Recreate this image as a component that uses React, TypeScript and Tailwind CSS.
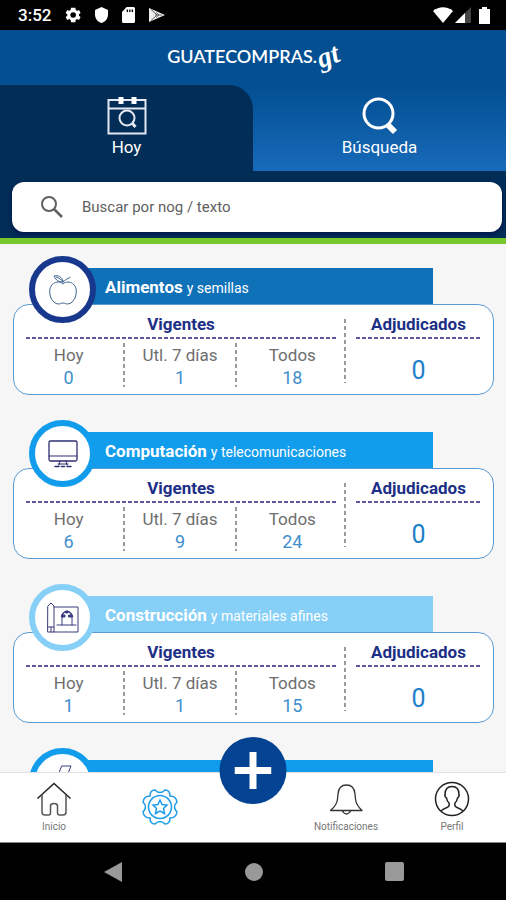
import type { ReactNode } from "react";

type Category = {
  name: string;
  rest: string;
  tone: string;
  ring: string;
  icon: ReactNode;
  counts: [string, number][];
  awarded: number;
};

const lineIcon = {
  fill: "none",
  stroke: "currentColor",
  strokeLinecap: "round",
  strokeLinejoin: "round",
  "aria-hidden": true,
} as const;

const AppleIcon = () => (
  <svg {...lineIcon} width="32" height="34" viewBox="0 0 32 34" className="text-[#3f6590]">
    <path d="M16 10.500c-3-2-7-2-9.500 0C2 13 2 20 4 25c1.500 3 4 6 7.500 6 2 0 2.500-1 4.500-1s2.500 1 4.500 1c3.500 0 6-3 7.500-6 2-5 2-12-2.500-14.500-2.500-2-6.500-2-9.500 0z" />
    <path d="M16 8.500c-4 1-7-1-9-5.500 4-1 8 .5 9 5.500zM16 8.500c2-1 4-3 7-4M9 4c3 1 5 2.500 7 4.500" />
  </svg>
);

const ComputerIcon = () => (
  <svg {...lineIcon} width="32" height="30" viewBox="0 0 32 30" className="text-[#2d2f73]">
    <rect x="2" y="2" width="28" height="20" rx="1.500" strokeWidth="1.300" />
    <path d="M2 17h28M13 22l-1 4M19 22l1 4M11 25h10" />
    <path d="M8 27.500h4M14.500 27.500h3M20 27.500h4" strokeWidth="1.500" />
  </svg>
);

const PlanIcon = () => (
  <svg {...lineIcon} width="34" height="32" viewBox="0 0 34 32" className="text-[#3b3b80]">
    <path d="M2 4l3-3 3 3v26H2zM8 5h24v25H8M2 25h6M5 25v5M11 23h19M16 23v-9M26 23v-9" />
    <path d="M15.500 14.500c1-3 3-5 5.500-5s4.500 2 5.500 5" strokeWidth="1.500" />
    <path d="M16 13h3v2h-3zM23 13h3v2h-3zM20 9h2v2h-2z" fill="currentColor" />
  </svg>
);

const BoltIcon = () => (
  <svg {...lineIcon} width="32" height="34" viewBox="0 0 32 34" className="text-[#3b3b80]">
    <path d="M15 1h9l-4 10h6L12 32l4-15H9z" />
  </svg>
);

const categories: Category[] = [
  { name: "Alimentos", rest: "y semillas", tone: "bg-[#0f72b9]", ring: "border-[#17388c]", icon: <AppleIcon />, counts: [["Hoy", 0], ["Utl. 7 días", 1], ["Todos", 18]], awarded: 0 },
  { name: "Computación", rest: "y telecomunicaciones", tone: "bg-[#119cec]", ring: "border-[#119cec]", icon: <ComputerIcon />, counts: [["Hoy", 6], ["Utl. 7 días", 9], ["Todos", 24]], awarded: 0 },
  { name: "Construcción", rest: "y materiales afines", tone: "bg-[#86cff7]", ring: "border-[#86cff7]", icon: <PlanIcon />, counts: [["Hoy", 1], ["Utl. 7 días", 1], ["Todos", 15]], awarded: 0 },
  { name: "Electricidad", rest: "", tone: "bg-[#119cec]", ring: "border-[#119cec]", icon: <BoltIcon />, counts: [], awarded: 0 },
];

const HorizontalDashes = () => (
  <div className="h-0.5 bg-[repeating-linear-gradient(90deg,#5c569f_0_4px,transparent_4px_6px)]" />
);

const VerticalDashes = ({ className = "" }: { className?: string }) => (
  <div className={`w-0.5 shrink-0 bg-[repeating-linear-gradient(180deg,#9a9a9a_0_4px,transparent_4px_7px)] ${className}`} />
);

function CategoryCard({ item }: { item: Category }) {
  return (
    <article className="relative">
      <h2 className={`mr-[61px] ml-12 flex h-9 items-center gap-1 pt-0.5 pl-11 text-white ${item.tone}`}>
        <span className="text-[17px] leading-6 font-bold">{item.name}</span>
        <span className="pt-0.5 text-sm">{item.rest}</span>
      </h2>
      {item.counts.length > 0 && (
        <div className="flex h-[91px] rounded-2xl border border-[#5b9bd3] bg-white px-3 pt-2">
          <section className="flex-1">
            <h3 className="pb-0.5 text-center text-[17px] leading-[22px] font-bold text-[#1c2f86]">Vigentes</h3>
            <HorizontalDashes />
            <dl className="-mr-3 -ml-3 flex pt-1">
              {item.counts.map(([label, value], index) => (
                <div key={label} className="flex flex-1">
                  <div className="flex-1 text-center">
                    <dt className="text-[17px] leading-6 text-[#6e6e6e]">{label}</dt>
                    <dd className="text-lg leading-[22px] text-[#3f8fcd]">{value}</dd>
                  </div>
                  {index < 2 && <VerticalDashes className="h-11" />}
                </div>
              ))}
            </dl>
          </section>
          <VerticalDashes className="mr-2.5 ml-2 mt-1.5 h-16" />
          <section className="w-[125px]">
            <h3 className="pb-0.5 text-center text-[17px] leading-[22px] font-bold text-[#1c2f86]">Adjudicados</h3>
            <HorizontalDashes />
            <p className="pt-4 text-center text-[25px] leading-8 text-[#1c80c8]">{item.awarded}</p>
          </section>
        </div>
      )}
      <div className={`absolute -top-3 left-4 flex size-[67px] items-center justify-center rounded-full border-[6px] bg-white ${item.ring}`}>
        {item.icon}
      </div>
    </article>
  );
}

function StatusBar() {
  return (
    <div className="flex h-[30px] shrink-0 items-center justify-between bg-black pr-4 pl-[18px] text-white">
      <div className="flex items-center gap-3.5">
        <time className="text-[17px] leading-5 font-medium">3:52</time>
        <svg width="16" height="16" viewBox="2 2 20 20" fill="currentColor" aria-hidden="true">
          <path fillRule="evenodd" d="M19.400 13a7 7 0 0 0 0-2l2.100-1.600-2-3.500-2.500 1a7 7 0 0 0-1.700-1L15 3H9.500l-.5 2.900a7 7 0 0 0-1.700 1l-2.500-1-2 3.500L4.900 11a7 7 0 0 0 0 2l-2.100 1.600 2 3.500 2.500-1a7 7 0 0 0 1.700 1l.5 2.900H15l.3-2.900a7 7 0 0 0 1.700-1l2.500 1 2-3.500zM12.200 15.500a3.500 3.500 0 1 1 0-7 3.500 3.500 0 0 1 0 7z" />
        </svg>
        <svg width="13" height="16" viewBox="0 0 14 16" preserveAspectRatio="none" fill="currentColor" aria-hidden="true">
          <path d="M7 0l7 3v4.500C14 11.500 11 15 7 16 3 15 0 11.500 0 7.500V3z" />
        </svg>
        <svg width="13" height="16" viewBox="0 0 14 16" preserveAspectRatio="none" fill="currentColor" aria-hidden="true">
          <path fillRule="evenodd" d="M5 0h7.500A1.500 1.500 0 0 1 14 1.500v13a1.500 1.500 0 0 1-1.500 1.500h-11A1.500 1.500 0 0 1 0 14.500V5zM5 2.500V5h1.500V2.500zm2.700 0V5h1.500V2.500zm2.700 0V5h1.500V2.500z" />
        </svg>
        <svg width="16" height="16" viewBox="0 0 16 16" aria-hidden="true">
          <path d="M0 1l16 7L0 15z" fill="#eee" />
          <path d="M2 2.500l6 5.500-6 5.500M6 8l7 0M7 5.500l3 2.500-3 2.500" fill="none" stroke="#666" />
        </svg>
      </div>
      <div className="flex items-center">
        <svg width="20" height="16" viewBox="0 0 20 16" fill="currentColor" aria-hidden="true">
          <path d="M0 4C6-1 14-1 20 4L10 16z" />
        </svg>
        <svg width="16" height="16" viewBox="0 0 16 16" className="ml-0.5" aria-hidden="true">
          <path d="M16 0v16H0z" fill="#444" />
          <path d="M10 6v10H0z" fill="#fff" />
        </svg>
        <svg width="11" height="17" viewBox="0 0 11 17" fill="currentColor" className="ml-2" aria-hidden="true">
          <path d="M3 0h5v2h3v15H0V2h3z" />
        </svg>
      </div>
    </div>
  );
}

function NavButton({ label, children }: { label: string; children: ReactNode }) {
  return (
    <button type="button" className="flex w-20 flex-col items-center pt-2 text-[10px] leading-3 text-[#777]">
      {children}
      <span className="pt-1">{label}</span>
    </button>
  );
}

export default function App() {
  return (
    <div className="flex h-screen flex-col bg-[#f6f6f6] font-[Roboto,'Noto_Sans',sans-serif]">
      <StatusBar />
      <header className="shrink-0 border-b-[6px] border-[#78c82d] bg-[#022d56]">
        <div className="bg-linear-to-b from-[#034f92] from-40% to-[#176bba]">
          <h1 className="flex h-[55px] items-center justify-center pb-1 font-[Lato,sans-serif] text-lg font-semibold text-white">
            GUATECOMPRAS.
            <span className="-rotate-20 font-['Liberation_Serif',serif] text-[28px] leading-7 italic">gt</span>
          </h1>
          <nav className="flex h-[86px] text-[17px] leading-6 text-white">
            <button type="button" className="flex flex-1 flex-col items-center rounded-tr-3xl bg-[#022d56] pt-3">
              <svg width="40" height="38" viewBox="0 0 40 38" fill="none" stroke="#e4e8f4" strokeWidth="2" aria-hidden="true">
                <rect x="1.500" y="3" width="37" height="33.500" />
                <path d="M1 11.500h38" />
                <path d="M14 0v7M27 0v7" stroke="#fff" strokeWidth="5" />
                <circle cx="20" cy="21" r="7.500" />
                <path d="M25 26l3.500 4" strokeWidth="3" />
              </svg>
              Hoy
            </button>
            <button type="button" className="flex flex-1 flex-col items-center pt-3">
              <svg width="38" height="38" viewBox="0 0 38 38" fill="none" stroke="white" strokeWidth="3" aria-hidden="true">
                <circle cx="17.500" cy="16.500" r="14.500" />
                <path d="M27 28l7 7" strokeWidth="6" />
              </svg>
              Búsqueda
            </button>
          </nav>
        </div>
        <div className="px-3 pt-[11px] pr-1 pb-1.5">
          <label className="flex h-[50px] items-center gap-[18px] rounded-xl bg-white pl-7 shadow-[0_2px_4px_#02104f]">
            <svg width="24" height="24" viewBox="0 0 24 24" fill="none" stroke="#606060" strokeWidth="2" aria-hidden="true">
              <circle cx="9" cy="9" r="7" />
              <path d="M14 14l8 8" strokeWidth="2.500" />
            </svg>
            <input type="search" aria-label="Buscar" placeholder="Buscar por nog / texto" className="min-w-0 flex-1 bg-transparent text-[15px] outline-none placeholder:text-[#606060]" />
          </label>
        </div>
      </header>

      <main className="flex min-h-0 flex-1 flex-col gap-[37px] overflow-y-auto pt-6 pr-3 pl-[13px] [scrollbar-width:none]">
        {categories.map((item) => (
          <CategoryCard key={item.name} item={item} />
        ))}
      </main>

      <nav className="relative flex h-[70px] shrink-0 justify-between border-t border-[#e0e0e0] bg-white px-3.5">
        <div className="flex gap-[26px]">
          <NavButton label="Inicio">
            <svg width="36" height="36" viewBox="0 0 36 36" fill="none" stroke="#555" strokeWidth="1.500" aria-hidden="true">
              <path d="M1.500 17.500L18 2.500l16.500 15" stroke="#222" />
              <path d="M6 14v17q0 3 3 3h3.500q2 0 2-2v-7q0-2.500 3.500-2.500t3.500 2.500v7q0 2 2 2H27q3 0 3-3V14" />
            </svg>
          </NavButton>
          <button type="button" aria-label="Destacados" className="flex w-20 justify-center pt-[15px]">
            <svg width="38" height="38" viewBox="-19 -19 38 38" fill="none" stroke="#1b9be8" strokeWidth="1.500" aria-hidden="true">
              <path d="M-5-17Q0-12 5-17q5 0 5 6 6 0 7 6-5 5 0 10-1 6-7 6 0 6-5 6-5-5-10 0-5 0-5-6-6 0-7-6 5-5 0-10 1-6 7-6 0-6 5-6z" />
              <circle r="11.500" />
              <path d="M0-7l2 4.500 5 .5-3.500 3.500 1 5L0 4l-4.500 2.500 1-5L-7-2l5-.5z" />
            </svg>
          </button>
        </div>
        <div className="flex gap-[26px]">
          <NavButton label="Notificaciones">
            <svg width="36" height="36" viewBox="0 0 36 36" fill="none" stroke="#333" strokeWidth="1.300" strokeLinejoin="round" aria-hidden="true">
              <path d="M2.500 29.500Q9 24 9.500 18l.5-5c.5-6 4-9 8.500-9s8 3 8.500 9l.5 5q.5 6 6.500 11.500zM14 29.500q4.500 7 9 0" />
            </svg>
          </NavButton>
          <NavButton label="Perfil">
            <svg width="36" height="36" viewBox="0 0 36 36" fill="none" stroke="#222" strokeWidth="1.500" aria-hidden="true">
              <circle cx="18" cy="18" r="16.500" />
              <path d="M7 30q2-2 6-3.500 3-1 2-4.500-2-2-2.500-5-2-1-1.500-3.500 0-8 7-8t7 8q.5 2.500-1.500 3.500-.5 3-2.500 5-1 3.500 2 4.500 4 1.500 6 3.500" />
            </svg>
          </NavButton>
        </div>
        <button type="button" aria-label="Agregar" className="absolute -top-9 left-1/2 flex size-[67px] -translate-x-1/2 items-center justify-center rounded-full bg-[#044391]">
          <svg width="37" height="37" viewBox="0 0 37 37" stroke="white" strokeWidth="7" aria-hidden="true">
            <path d="M18.500 0v37M0 18.500h37" />
          </svg>
        </button>
      </nav>

      <div className="flex h-[58px] shrink-0 items-center justify-center gap-[122px] border-t border-[#888] bg-black text-[#999]">
        <button type="button" aria-label="Atrás">
          <svg width="20" height="22" viewBox="0 0 20 22" fill="currentColor" aria-hidden="true"><path d="M19 1v20L1 11z" /></svg>
        </button>
        <button type="button" aria-label="Inicio del teléfono" className="size-[18px] rounded-full bg-[#999]" />
        <button type="button" aria-label="Recientes" className="size-[19px] rounded-xs bg-[#999]" />
      </div>
    </div>
  );
}
